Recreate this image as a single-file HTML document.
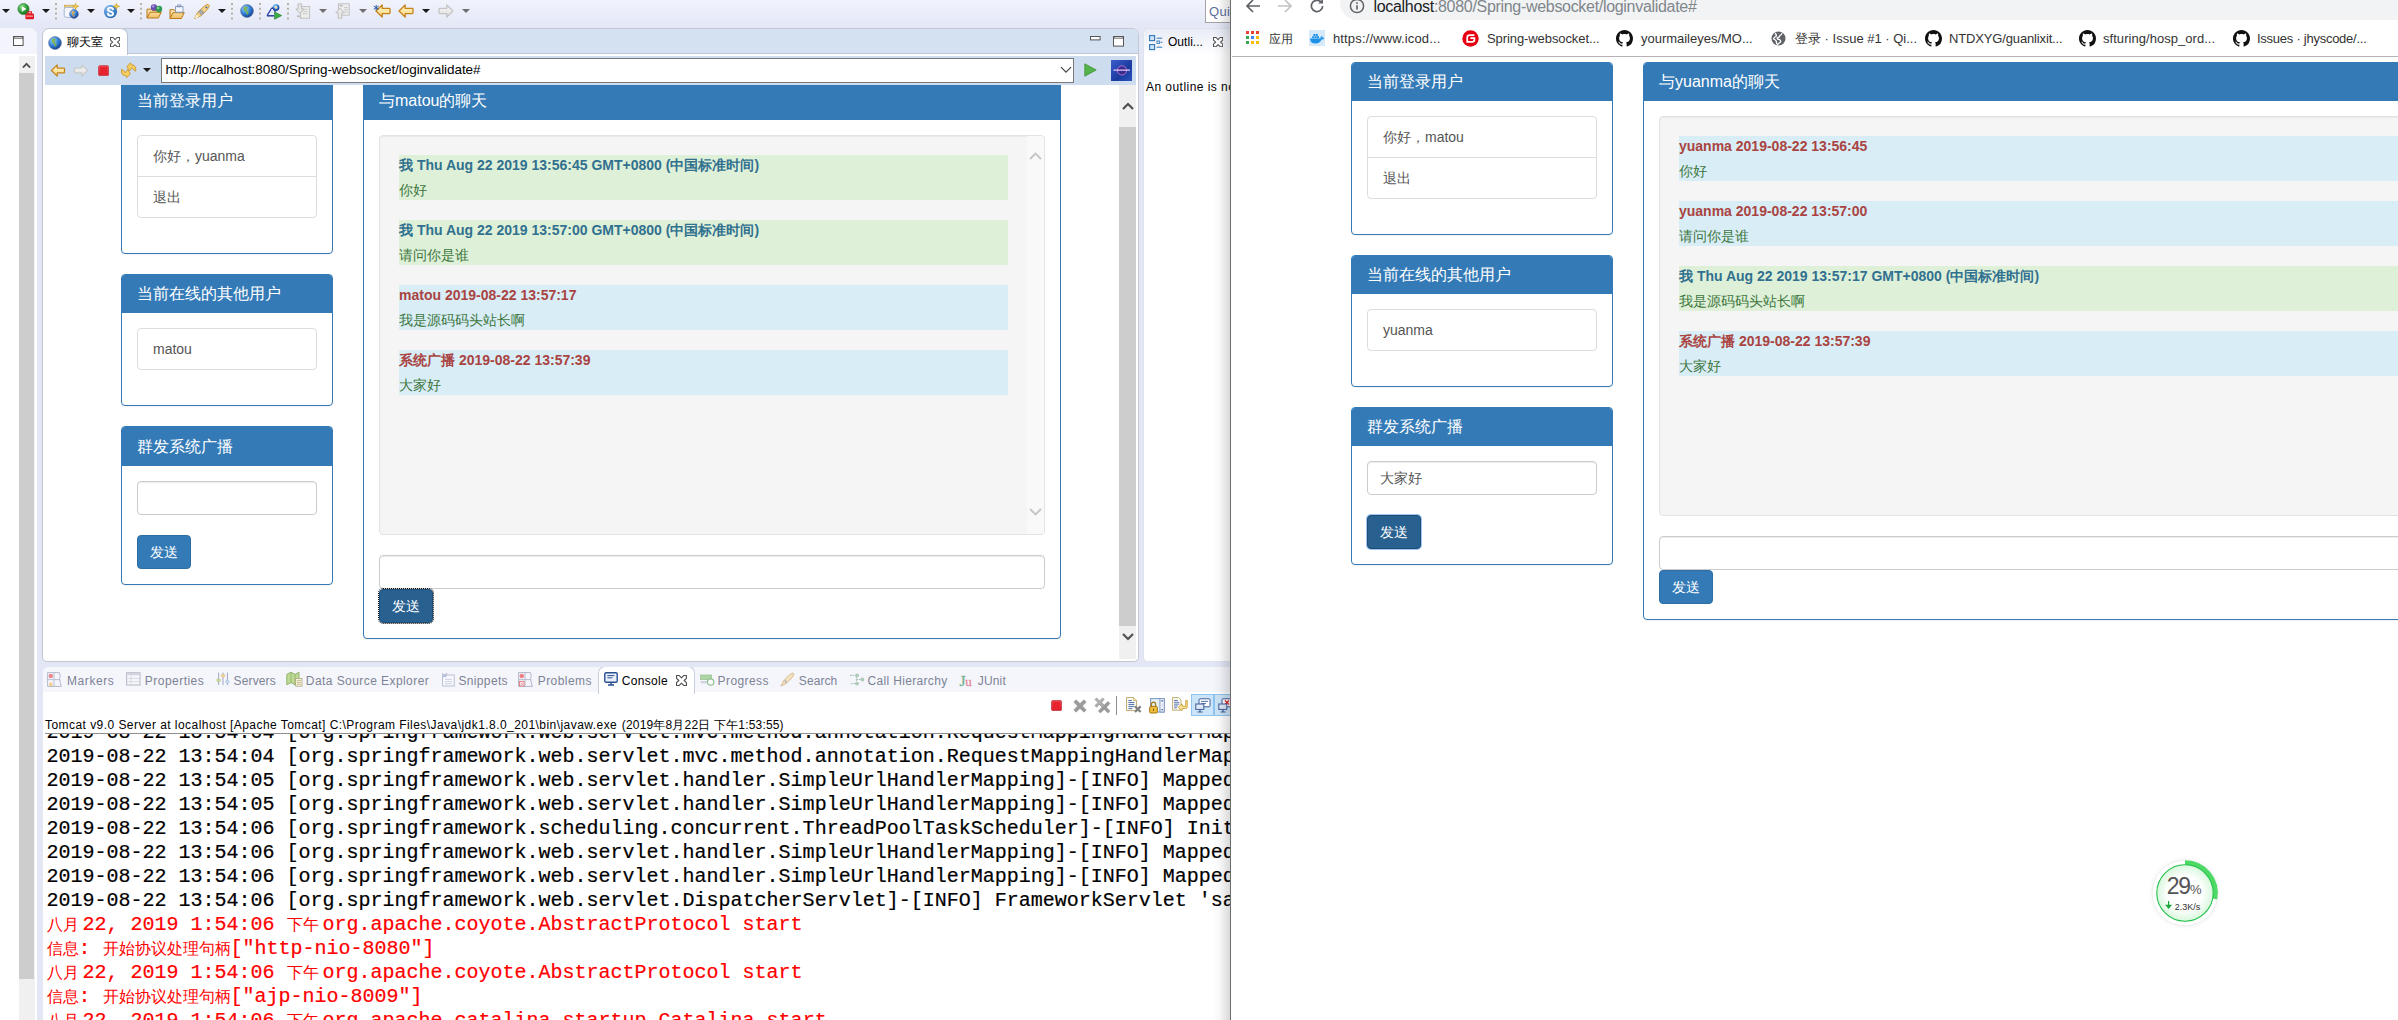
<!DOCTYPE html>
<html lang="zh">
<head>
<meta charset="utf-8">
<title>聊天室</title>
<style>
*{box-sizing:border-box;margin:0;padding:0}
html,body{width:2398px;height:1020px;overflow:hidden;background:#fff}
body{font-family:"Liberation Sans",sans-serif;font-size:12px;color:#000;position:relative}
.abs{position:absolute}
.nw{white-space:nowrap}
/* ---------- Eclipse shell ---------- */
#ecl{position:absolute;left:0;top:0;width:1231px;height:1020px;overflow:hidden;background:#e2e6f5}
#ecl-top{position:absolute;left:0;top:0;width:1231px;height:28px;background:linear-gradient(#f1f3fc,#e3e7f6)}
#leftstub{position:absolute;left:0;top:28px;width:37px;height:992px;background:#fff;border-top-right-radius:8px;overflow:hidden}
#leftstub .hd{position:absolute;left:0;top:0;width:37px;height:26px;background:#f4f5fc}
#editor{position:absolute;left:42px;top:28px;width:1097px;height:634px;background:#fff;border:1px solid #c3c7d2;border-radius:7px 7px 5px 5px;overflow:hidden}
#edtabs{position:absolute;left:0;top:0;width:1095px;height:25px;background:#d3e1f1;border-bottom:1px solid #b9c6da}
#edtab{position:absolute;left:-1px;top:-1px;width:86px;height:27px;background:#fff;border:1px solid #b9c0d3;border-bottom:none;border-radius:7px 7px 0 0}
#brbar{position:absolute;left:2px;top:27px;width:1091px;height:29px;background:#cddcee}
#url{position:absolute;left:116px;top:2px;width:913px;height:25px;background:#fff;border:1px solid #7a7a7a;font-size:13.5px;line-height:22px;padding-left:3.5px;white-space:nowrap}
#iepage{position:absolute;left:2px;top:56px;width:1074px;height:574px;background:#fff;overflow:hidden}
#iescroll{position:absolute;left:1076px;top:56px;width:17px;height:574px;background:#f0f0f0}
#outline{position:absolute;left:1143px;top:28px;width:100px;height:634px;background:#fff;border:1px solid #dfe3ef;border-radius:7px 0 0 5px;overflow:hidden}
#console{position:absolute;left:42px;top:666px;width:1200px;height:360px;background:#fff;border:1px solid #e4e8f4;border-radius:7px 0 0 0;overflow:hidden}
#contabs{position:absolute;left:0;top:0;width:1200px;height:25px;background:#f5f6fc}
/* ---------- bootstrap-ish ---------- */
.bs{font-size:14px;line-height:20px;color:#333}
.panel{position:absolute;background:#fff;border:1px solid #337ab7;border-radius:4px;box-shadow:0 1px 1px rgba(0,0,0,.05)}
.ph{position:absolute;left:0;top:0;right:0;height:38px;background:#337ab7;color:#fff;font-size:16px;line-height:18px;padding:10px 15px;border-radius:3px 3px 0 0;white-space:nowrap}
.lg{position:absolute;border:1px solid #ddd;border-radius:4px;background:#fff}
.lgi{height:41px;padding:10px 15px;color:#555;border-bottom:1px solid #ddd;white-space:nowrap}
.lgi:last-child{border-bottom:none;height:40px}
.fc{position:absolute;height:34px;border:1px solid #ccc;border-radius:4px;background:#fff;box-shadow:inset 0 1px 1px rgba(0,0,0,.075);padding:6px 12px;color:#555;white-space:nowrap}
.btn{position:absolute;width:54px;height:34px;border:1px solid #2e6da4;border-radius:4px;background:#337ab7;color:#fff;padding:6px 12px;text-align:center;white-space:nowrap}
.btn.act{background:#286090;border-color:#204d74}
.well{position:absolute;background:#f5f5f5;border:1px solid #e3e3e3;border-radius:4px;box-shadow:inset 0 1px 1px rgba(0,0,0,.05);overflow:hidden}
.msg{position:absolute;height:45px;white-space:nowrap}
.msg b{position:absolute;left:0;top:0;font-weight:bold}
.msg i{position:absolute;left:0;top:25px;font-style:normal;color:#3c763d}
.info{background:#d9edf7}.info b{color:#a94442}
.succ{background:#dff0d8}.succ b{color:#31708f}
/* ---------- chrome ---------- */
#chr{position:absolute;left:1231px;top:0;width:1167px;height:1020px;background:#fff;overflow:hidden;border-left:1px solid #fff}
#omni{position:absolute;left:108px;top:-14px;width:1200px;height:34px;border-radius:17px;background:#f1f3f4}
#bm{position:absolute;left:0;top:20px;width:1167px;height:37px;border-bottom:1px solid #b4b2b4;font-size:13px;color:#333}
#bm span{position:absolute;top:12px;line-height:14px;white-space:nowrap}
/* ---------- console ---------- */
.ct{font-size:12px;line-height:15px;margin-top:1px}
#context{position:absolute;left:2px;top:66px;width:1195px;height:300px;overflow:hidden;background:#fff;border-top:1px solid #8f8f8f}
#conlabel{position:absolute;left:2px;top:51px;font-size:12px;line-height:15px;color:#000}
.cl u{display:inline-block;text-decoration:none;font-family:"Liberation Serif",serif;font-size:16px;letter-spacing:0;vertical-align:baseline;white-space:pre;overflow:visible;-webkit-text-stroke:0}
.cl{position:absolute;left:1.5px;height:24px;line-height:24px;font-family:"Liberation Mono",monospace;font-size:20px;white-space:pre;color:#000;-webkit-text-stroke:.2px currentColor}
.cl.r{color:#ff0000}
/*FIT*/
#url-t{letter-spacing:-0.060px}
#ct-mark{letter-spacing:0.608px}
#ct-prop{letter-spacing:0.470px}
#ct-serv{letter-spacing:0.151px}
#ct-dse{letter-spacing:0.433px}
#ct-snip{letter-spacing:0.362px}
#ct-prob{letter-spacing:0.452px}
#ct-cons{letter-spacing:0.310px}
#ct-prog{letter-spacing:0.396px}
#ct-sear{letter-spacing:0.095px}
#ct-call{letter-spacing:0.324px}
#ct-juni{letter-spacing:0.191px}
#conlabel-a{letter-spacing:0.446px}
#conlabel-b{letter-spacing:0.178px}
#bm-1{letter-spacing:0.139px}
#bm-2{letter-spacing:-0.088px}
#bm-3{letter-spacing:-0.016px}
#bm-5{letter-spacing:-0.149px}
#bm-6{letter-spacing:0.045px}
#bm-7{letter-spacing:-0.257px}
#t-omni{letter-spacing:-0.307px}
#t-outl{letter-spacing:0.039px}
/*ENDFIT*/
</style>
</head>
<body>
<svg width="0" height="0" style="position:absolute">
<defs>
<radialGradient id="gGlobe" cx="35%" cy="30%" r="75%"><stop offset="0" stop-color="#9fd4ff"/><stop offset=".55" stop-color="#2f7fd6"/><stop offset="1" stop-color="#143c8c"/></radialGradient>
<radialGradient id="gGreen" cx="35%" cy="30%" r="75%"><stop offset="0" stop-color="#8fe08a"/><stop offset=".6" stop-color="#2f9e3a"/><stop offset="1" stop-color="#17681f"/></radialGradient>
<radialGradient id="gBlueS" cx="35%" cy="30%" r="80%"><stop offset="0" stop-color="#8fc0ee"/><stop offset=".6" stop-color="#3f86cf"/><stop offset="1" stop-color="#2b64a8"/></radialGradient>
<linearGradient id="gYel" x1="0" y1="0" x2="0" y2="1"><stop offset="0" stop-color="#fff6cf"/><stop offset="1" stop-color="#f9d67a"/></linearGradient>
<linearGradient id="gGry" x1="0" y1="0" x2="0" y2="1"><stop offset="0" stop-color="#fbfbfb"/><stop offset="1" stop-color="#dcdcdc"/></linearGradient>
<linearGradient id="gRed" x1="0" y1="0" x2="0" y2="1"><stop offset="0" stop-color="#f0505a"/><stop offset="1" stop-color="#d81e28"/></linearGradient>
<linearGradient id="gFold" x1="0" y1="0" x2="0" y2="1"><stop offset="0" stop-color="#fde9b8"/><stop offset="1" stop-color="#f0bf62"/></linearGradient>
</defs>
<symbol id="dd" viewBox="0 0 8 4"><path d="M0 0H8L4 4Z"/></symbol>
<symbol id="sepv" viewBox="0 0 2 17"><path d="M0 0h2v2H0zM0 4.8h2v2H0zM0 9.6h2v2H0zM0 14.4h2v2H0z" fill="#b9b3a3"/></symbol>
<symbol id="arrL" viewBox="0 0 16 14"><path d="M7.2 1 L1 7 L7.2 13 V9.6 H14.2 Q15 9.6 15 8.8 V5.2 Q15 4.4 14.2 4.4 H7.2 Z" stroke-width="1.3" stroke-linejoin="round"/></symbol>
<symbol id="arrR" viewBox="0 0 16 14"><path d="M8.8 1 L15 7 L8.8 13 V9.6 H1.8 Q1 9.6 1 8.8 V5.2 Q1 4.4 1.8 4.4 H8.8 Z" stroke-width="1.3" stroke-linejoin="round"/></symbol>
<symbol id="globe" viewBox="0 0 14 14"><circle cx="7" cy="7" r="6.4" fill="url(#gGlobe)" stroke="#5a6e9a" stroke-width=".6"/><path d="M4.2 2.6 Q6.5 2 8 3.4 Q7.6 5.2 6 5.6 Q6.8 7.2 8.6 7.6 Q9 9.6 7.4 11 Q6.2 9.6 6.2 8.2 Q4.4 7.4 3.6 5.6 Z" fill="#7cb24a" opacity=".9"/></symbol>
<symbol id="xclose" viewBox="0 0 10 10"><path d="M.5 .5H3L5 2.6L7 .5H9.5V3L7.4 5L9.5 7V9.5H7L5 7.4L3 9.5H.5V7L2.6 5L.5 3Z" fill="#fff" stroke="#505050" stroke-width="1" stroke-linejoin="round"/></symbol>
<symbol id="folder" viewBox="0 0 16 14"><path d="M1 13 V4.2 H5.2 L6.4 5.6 H12.2 V7.2 H15.2 L12.4 13 Z" fill="url(#gFold)" stroke="#b9781c" stroke-width="1" stroke-linejoin="round"/><path d="M1 13 L4 7.2 H15.2" fill="none" stroke="#b9781c" stroke-width="1"/></symbol>
<symbol id="gh" viewBox="0 0 16 16"><path fill="#111" d="M8 0C3.58 0 0 3.58 0 8c0 3.54 2.29 6.53 5.47 7.59.4.07.55-.17.55-.38 0-.19-.01-.82-.01-1.49-2.01.37-2.53-.49-2.69-.94-.09-.23-.48-.94-.82-1.13-.28-.15-.68-.52-.01-.53.63-.01 1.08.58 1.23.82.72 1.21 1.87.87 2.33.66.07-.52.28-.87.51-1.07-1.78-.2-3.64-.89-3.64-3.95 0-.87.31-1.59.82-2.15-.08-.2-.36-1.02.08-2.12 0 0 .67-.21 2.2.82.64-.18 1.32-.27 2-.27s1.36.09 2 .27c1.53-1.04 2.2-.82 2.2-.82.44 1.1.16 1.92.08 2.12.51.56.82 1.27.82 2.15 0 3.07-1.87 3.75-3.65 3.95.29.25.54.73.54 1.48 0 1.07-.01 1.93-.01 2.2 0 .21.15.46.55.38A8.01 8.01 0 0016 8c0-4.42-3.58-8-8-8z"/></symbol>
</svg>

<!-- ======================= ECLIPSE ======================= -->
<div id="ecl">
  <div id="ecl-top">
    <svg class="abs" style="left:1.5px;top:9px" width="8" height="4" fill="#1a1a1a"><use href="#dd"/></svg>
    <svg class="abs" style="left:17px;top:2.7px" width="18" height="17" viewBox="0 0 18 17"><circle cx="6.5" cy="6" r="5.6" fill="url(#gGreen)" stroke="#2a7a2f" stroke-width=".6"/><path d="M4.8 3.2 L9.4 6 L4.8 8.8Z" fill="#fff"/><rect x="8.4" y="10.4" width="8.6" height="5.8" rx="1" fill="#e01b24"/><rect x="11" y="8.8" width="3.4" height="2.2" fill="none" stroke="#e01b24" stroke-width="1.1"/><rect x="9.4" y="12.6" width="6.6" height="1" fill="#ffc9c9"/></svg>
    <svg class="abs" style="left:41.5px;top:9px" width="8" height="4" fill="#1a1a1a"><use href="#dd"/></svg>
    <svg class="abs" style="left:55px;top:3px" width="2" height="17"><use href="#sepv"/></svg>
    <svg class="abs" style="left:63px;top:3px" width="17" height="16" viewBox="0 0 17 16"><rect x="1.5" y="2.2" width="9" height="2" fill="#f1d489" stroke="#c09a3a" stroke-width=".6"/><rect x="1.2" y="4.4" width="9.6" height="10" rx="2.2" fill="#f4f6fb" stroke="#9fb0cf" stroke-width=".9"/><circle cx="11" cy="11" r="4.4" fill="url(#gGlobe)" stroke="#4a5f92" stroke-width=".5"/><path d="M9.4 8.4 q1.8 -.4 2.6 .8 q-.6 1.6 -1.8 1.6 q.4 1.6 1.8 2 q-.6 1 -1.8 1.2 q-1 -1.6 -.8 -3 q-1.2 -.8 -1 -2z" fill="#f0a030" opacity=".85"/><path d="M12.6 0.4 L13.5 2.5 L15.8 3.3 L13.5 4.2 L12.6 6.4 L11.7 4.2 L9.6 3.3 L11.7 2.5Z" fill="#f7d04a" stroke="#b8860b" stroke-width=".5"/></svg>
    <svg class="abs" style="left:86.5px;top:9px" width="8" height="4" fill="#1a1a1a"><use href="#dd"/></svg>
    <svg class="abs" style="left:103px;top:3px" width="18" height="16" viewBox="0 0 18 16"><circle cx="7.5" cy="8.6" r="6.6" fill="url(#gBlueS)"/><path d="M10 6.2 Q9.4 4.6 7.4 4.6 Q5 4.6 5 6.6 Q5 8 7.4 8.6 Q10 9.2 10 10.8 Q10 12.6 7.6 12.6 Q5.2 12.6 4.8 10.8" fill="none" stroke="#fff" stroke-width="1.9" stroke-linecap="round"/><path d="M13.4 0.4 L14.3 2.5 L16.6 3.3 L14.3 4.2 L13.4 6.4 L12.5 4.2 L10.4 3.3 L12.5 2.5Z" fill="#f7d04a" stroke="#b8860b" stroke-width=".5"/></svg>
    <svg class="abs" style="left:126.5px;top:9px" width="8" height="4" fill="#1a1a1a"><use href="#dd"/></svg>
    <svg class="abs" style="left:140px;top:3px" width="2" height="17"><use href="#sepv"/></svg>
    <svg class="abs" style="left:146px;top:3px" width="18" height="16" viewBox="0 0 18 16"><g transform="translate(0,2)"><use href="#folder" width="16" height="14"/></g><circle cx="8" cy="4.4" r="3.2" fill="#6b4fb0"/><circle cx="7.2" cy="3.4" r="1.1" fill="#b8a6e6"/><circle cx="13" cy="6" r="3.2" fill="#2e9a52"/><circle cx="12.2" cy="5" r="1.1" fill="#a4e2b6"/></svg>
    <svg class="abs" style="left:169px;top:4px" width="18" height="16" viewBox="0 0 18 16"><g transform="translate(0,1.5)"><use href="#folder" width="16" height="14"/></g><rect x="6.6" y="2.6" width="7.4" height="5.6" fill="#f4f7ff" stroke="#7f93b8" stroke-width=".9"/><rect x="8.8" y="1" width="3" height="1.8" fill="none" stroke="#7f93b8" stroke-width=".9"/></svg>
    <svg class="abs" style="left:193px;top:3px" width="18" height="17" viewBox="0 0 18 17"><path d="M1.5 15.5 L4.6 9.4 L11.4 3 L15 1.2 L16.4 2.6 L14.6 6.2 L8 12.8 Z" fill="#f6d38a" stroke="#c68e2a" stroke-width=".9" stroke-linejoin="round"/><path d="M5.4 9 L8.6 12.2 L11.2 9.6 L8 6.4Z" fill="#a8a8a8" stroke="#8a8a8a" stroke-width=".5"/><path d="M1.5 15.5 L3.6 11.6 L5.8 13.8Z" fill="#fffbe8"/><circle cx="13.4" cy="4.4" r=".9" fill="#2c5fa8"/></svg>
    <svg class="abs" style="left:217.5px;top:9px" width="8" height="4" fill="#1a1a1a"><use href="#dd"/></svg>
    <svg class="abs" style="left:231px;top:3px" width="2" height="17"><use href="#sepv"/></svg>
    <svg class="abs" style="left:239.5px;top:3.5px" width="14" height="14"><use href="#globe"/></svg>
    <svg class="abs" style="left:259px;top:3px" width="2" height="17"><use href="#sepv"/></svg>
    <svg class="abs" style="left:266px;top:3px" width="17" height="17" viewBox="0 0 17 17"><circle cx="10" cy="4.6" r="3.4" fill="url(#gGlobe)"/><circle cx="10" cy="4.4" r="1.4" fill="#f2d9a0"/><path d="M1 12.6 L5.4 5.6 Q6.4 4.4 7.4 5.6 L9.4 9" fill="none" stroke="#2a3fa0" stroke-width="1.3"/><path d="M1 12.8 H8" stroke="#2a3fa0" stroke-width="1.5"/><path d="M5.6 6 L7.8 9.6 L4 11.6Z" fill="#dfe8f8"/><path d="M8.6 9 L15.6 12.6 L8.6 16.2Z" fill="#3fae49" stroke="#1f7d2b" stroke-width=".7"/></svg>
    <svg class="abs" style="left:287px;top:3px" width="2" height="17"><use href="#sepv"/></svg>
    <svg class="abs" style="left:295px;top:3px" width="16" height="16" viewBox="0 0 16 16"><rect x="5.4" y="3.6" width="9.2" height="11.6" fill="#ececec" stroke="#bdbdbd" stroke-width=".9"/><path d="M7.4 6.4h5M7.4 8.6h5M7.4 10.8h5" stroke="#c8c8c8" stroke-width=".9"/><path d="M3 .8 H6.6 V6 H8.8 L4.8 10.4 L.8 6 H3Z" fill="#e6e6e6" stroke="#b5b5b5" stroke-width=".8"/><rect x="2" y="12.4" width="3.2" height="1.8" fill="#bdbdbd"/></svg>
    <svg class="abs" style="left:318.5px;top:9px" width="8" height="4" fill="#6f6f6f"><use href="#dd"/></svg>
    <svg class="abs" style="left:335px;top:3px" width="16" height="16" viewBox="0 0 16 16"><rect x="3.4" y=".8" width="10.8" height="11.4" fill="#ececec" stroke="#bdbdbd" stroke-width=".9"/><rect x="4.6" y="1.8" width="3" height="1.6" fill="#bdbdbd"/><path d="M9 4.6h4M9 6.8h4M9 9h4" stroke="#c8c8c8" stroke-width=".9"/><path d="M3.2 15.2 V9.8 H.8 L5 5.2 L9.2 9.8 H6.8 V15.2Z" fill="#e9e9e9" stroke="#b5b5b5" stroke-width=".8"/></svg>
    <svg class="abs" style="left:358.5px;top:9px" width="8" height="4" fill="#6f6f6f"><use href="#dd"/></svg>
    <svg class="abs" style="left:373px;top:4px" width="18" height="14" viewBox="0 0 18 14"><g transform="translate(2,0)"><use href="#arrL" width="16" height="14" fill="url(#gYel)" stroke="#c5831a"/></g><path d="M3.2 1v5.4M.8 2.2l4.8 3M5.6 2.2l-4.8 3" stroke="#2c5aa0" stroke-width="1"/></svg>
    <svg class="abs" style="left:398px;top:4px" width="16" height="14" fill="url(#gYel)" stroke="#c5831a"><use href="#arrL"/></svg>
    <svg class="abs" style="left:421.5px;top:9px" width="8" height="4" fill="#1a1a1a"><use href="#dd"/></svg>
    <svg class="abs" style="left:438px;top:4px" width="16" height="14" fill="url(#gGry)" stroke="#c4c4c4"><use href="#arrR"/></svg>
    <svg class="abs" style="left:461.5px;top:9px" width="8" height="4" fill="#6f6f6f"><use href="#dd"/></svg>
    <div class="abs nw" style="left:1205px;top:-1px;width:40px;height:24px;background:#fff;border:1px solid #a3a3a3;color:#5a6c9c;font-size:13px;line-height:24px;padding-left:3px;letter-spacing:.3px">Quick Access</div>
  </div>
  <div id="leftstub"><div class="hd"></div>
    <svg class="abs" style="left:12.6px;top:8px" width="11" height="10.4" viewBox="0 0 11 10.4"><rect x=".5" y=".5" width="9.6" height="9" fill="#fff" stroke="#555" stroke-width="1"/><rect x=".5" y=".5" width="9.6" height="2.2" fill="#555"/><rect x="1.4" y="1.3" width="7.8" height=".8" fill="#fff"/></svg>
    <div class="abs" style="left:19px;top:28px;width:16px;height:964px;background:#f0f0f0"></div>
    <div class="abs" style="left:19px;top:45px;width:15px;height:906px;background:#cdcdcd"></div>
    <svg class="abs" style="left:22px;top:33.5px" width="9" height="6.4" viewBox="0 0 9 6.4"><path d="M.9 5.6 L4.5 1.8 L8.1 5.6" fill="none" stroke="#505050" stroke-width="1.8"/></svg>
  </div>

  <div id="editor">
    <div id="edtabs"></div>
    <div id="edtab">
      <svg class="abs" style="left:5.2px;top:6.8px" width="14" height="14"><use href="#globe"/></svg>
      <span class="abs nw" style="left:24px;top:6px;font-size:12px;line-height:15px">聊天室</span>
      <svg class="abs" style="left:66.8px;top:8px" width="10.2" height="10.2"><use href="#xclose"/></svg>
    </div>
    <svg class="abs" style="left:1047px;top:7px" width="11" height="5" viewBox="0 0 11 5"><rect x=".5" y=".5" width="9.6" height="3.4" fill="#fff" stroke="#555" stroke-width="1"/></svg>
    <svg class="abs" style="left:1070px;top:7px" width="12" height="11" viewBox="0 0 12 11"><rect x=".5" y=".5" width="10" height="9.6" fill="#fff" stroke="#555" stroke-width="1"/><rect x=".5" y=".5" width="10" height="2.2" fill="#555"/><rect x="1.4" y="1.3" width="8.2" height=".9" fill="#fff"/></svg>
    <div id="brbar">
      <svg class="abs" style="left:5px;top:8px" width="16" height="13" fill="url(#gYel)" stroke="#c5831a"><use href="#arrL"/></svg>
      <svg class="abs" style="left:28px;top:8px" width="16" height="13" fill="url(#gGry)" stroke="#c9c9c9"><use href="#arrR"/></svg>
      <svg class="abs" style="left:53px;top:8.7px" width="11.2" height="11.4" viewBox="0 0 12 12"><rect x=".6" y=".6" width="10.8" height="10.8" rx="1.6" fill="url(#gRed)" stroke="#c9434b" stroke-width="1"/><rect x="2" y="2" width="8" height="8" fill="#e8222e"/></svg>
      <svg class="abs" style="left:75.5px;top:6px" width="16" height="17" viewBox="0 0 16 17"><path d="M5.8 4.8 L9.4 .8 L10.4 2.8 Q13.6 2.6 14.6 5.4 L14.8 9.2 L12.6 7.8 Q11.8 5.8 10.8 5.8 L8.6 8.8 Z" fill="#f7cf5e" stroke="#c98d1e" stroke-width=".8" stroke-linejoin="round"/><path d="M5.8 4.8 L9.4 .8 L10.4 2.8 Q13.6 2.6 14.6 5.4 L14.8 9.2 L12.6 7.8 Q11.8 5.8 10.8 5.8 L8.6 8.8 Z" fill="#f7cf5e" stroke="#c98d1e" stroke-width=".8" stroke-linejoin="round" transform="rotate(180 7.6 8.2)"/></svg>
      <svg class="abs" style="left:98px;top:12px" width="8" height="4" fill="#1a1a1a"><use href="#dd"/></svg>
      <div id="url"><span id="url-t">http://localhost:8080/Spring-websocket/loginvalidate#</span></div>
      <svg class="abs" style="left:1015px;top:10px" width="12" height="8" viewBox="0 0 12 8"><path d="M1 1.2 L6 6.2 L11 1.2" fill="none" stroke="#444" stroke-width="1.2"/></svg>
      <svg class="abs" style="left:1039px;top:7px" width="13" height="14" viewBox="0 0 13 14"><path d="M.8 .8 L12.2 7 L.8 13.2Z" fill="#56b24a" stroke="#3c9435" stroke-width=".8" stroke-linejoin="round"/></svg>
      <div class="abs" style="left:1066px;top:4px;width:21px;height:21px;background:linear-gradient(135deg,#3d5fd0,#1a3a9c 60%,#2a55c0)">
        <svg class="abs" style="left:1px;top:3px" width="19" height="15" viewBox="0 0 19 15"><circle cx="10" cy="7.4" r="4.6" fill="#3a2a8c"/><circle cx="10" cy="7.4" r="4.6" fill="none" stroke="#c77fe0" stroke-width="1" opacity=".8"/><path d="M1.5 7.2 H18" stroke="#e9c8ff" stroke-width="1.2"/></svg>
      </div>
    </div>
    <div id="iepage" class="bs">
      <!-- origin = abs (45,85) -->
      <div class="panel" style="left:76px;top:-4px;width:212px;height:173px">
        <div class="ph">当前登录用户</div>
        <div class="lg" style="left:15px;top:53px;width:180px;height:83px">
          <div class="lgi">你好，yuanma</div>
          <div class="lgi">退出</div>
        </div>
      </div>
      <div class="panel" style="left:76px;top:189px;width:212px;height:132px">
        <div class="ph">当前在线的其他用户</div>
        <div class="lg" style="left:15px;top:53px;width:180px;height:42px">
          <div class="lgi">matou</div>
        </div>
      </div>
      <div class="panel" style="left:76px;top:341px;width:212px;height:159px">
        <div class="ph" style="height:39px;padding-top:11px">群发系统广播</div>
        <div class="fc" style="left:15px;top:54px;width:180px"></div>
        <div class="btn" style="left:15px;top:108px">发送</div>
      </div>
      <div class="panel" style="left:318px;top:-4px;width:698px;height:558px">
        <div class="ph">与matou的聊天</div>
        <div class="well" style="left:15px;top:53px;width:666px;height:400px">
          <div class="msg succ" style="left:19px;top:19px;width:609px"><b>我 Thu Aug 22 2019 13:56:45 GMT+0800 (中国标准时间)</b><i>你好</i></div>
          <div class="msg succ" style="left:19px;top:84px;width:609px"><b>我 Thu Aug 22 2019 13:57:00 GMT+0800 (中国标准时间)</b><i>请问你是谁</i></div>
          <div class="msg info" style="left:19px;top:149px;width:609px"><b>matou 2019-08-22 13:57:17</b><i>我是源码码头站长啊</i></div>
          <div class="msg info" style="left:19px;top:214px;width:609px"><b>系统广播 2019-08-22 13:57:39</b><i>大家好</i></div>
          <div class="abs" style="left:647px;top:0;width:17px;height:398px;background:#f9f9f9">
            <svg class="abs" style="left:2px;top:16px" width="13" height="8" viewBox="0 0 13 8"><path d="M1 7 L6.5 1.6 L12 7" fill="none" stroke="#c6c6c6" stroke-width="2"/></svg>
            <svg class="abs" style="left:2px;top:372px" width="13" height="8" viewBox="0 0 13 8"><path d="M1 1 L6.5 6.4 L12 1" fill="none" stroke="#c6c6c6" stroke-width="2"/></svg>
          </div>
        </div>
        <div class="fc" style="left:15px;top:473px;width:666px"></div>
        <div class="btn act" style="left:15px;top:507px;outline:1px dotted #111;outline-offset:0">发送</div>
      </div>
    </div>
    <div id="iescroll">
      <svg class="abs" style="left:2.5px;top:17px" width="12" height="8" viewBox="0 0 12 8"><path d="M1 7 L6 2 L11 7" fill="none" stroke="#505050" stroke-width="2.2"/></svg>
      <div class="abs" style="left:0;top:42px;width:17px;height:499px;background:#cdcdcd"></div>
      <svg class="abs" style="left:2.5px;top:548px" width="12" height="8" viewBox="0 0 12 8"><path d="M1 1 L6 6 L11 1" fill="none" stroke="#505050" stroke-width="2.2"/></svg>
    </div>
  </div>

  <div id="outline">
    <div class="abs" style="left:0;top:0;width:100px;height:26px;background:linear-gradient(#e9ecf7,#fff)"></div>
    <svg class="abs" style="left:5px;top:6px" width="14" height="16" viewBox="0 0 14 16"><rect x=".6" y=".6" width="5" height="5" fill="#cfe3f7" stroke="#2f76b8" stroke-width="1.1"/><rect x=".6" y="9.6" width="5" height="5" fill="#cfe3f7" stroke="#2f76b8" stroke-width="1.1"/><rect x="8" y="6" width="2.4" height="2.4" fill="#fff" stroke="#2f76b8" stroke-width=".9"/><path d="M7.6 3.2h5.6M11.4 7.2h2M7.6 12.2h5.6" stroke="#2f76b8" stroke-width="1"/></svg>
    <span class="abs nw" id="t-outl" style="left:24px;top:6px;font-size:12px;line-height:15px">Outli...</span>
    <svg class="abs" style="left:69px;top:8px" width="10.2" height="10.2"><use href="#xclose"/></svg>
    <span class="abs nw" id="t-anout" style="left:2px;top:51px;font-size:12px;line-height:15px;letter-spacing:.45px">An outline is not available.</span>
  </div>

  <div id="console">
    <div id="contabs">
      <div class="abs" style="left:555px;top:-1px;width:97px;height:28px;background:#fff;border:1px solid #c9cfdf;border-bottom:none;border-radius:7px 7px 0 0"></div>
      <svg class="abs" style="left:3.5px;top:5px" width="15" height="15" viewBox="0 0 15 15"><g opacity=".6"><path d="M.6 .6H12.4Q14 3 12.6 6.5Q13 11 14.4 14.4H.6Z" fill="#f4f6fb" stroke="#8a94ad" stroke-width="1"/><path d="M.6 7.6H13M7 .6V14.4" stroke="#8a94ad" stroke-width=".9"/><circle cx="3.8" cy="4" r="2.3" fill="#e8404a"/><path d="M2 14V11.6L3.8 10L5.6 11.6V14Z" fill="#f2b84a"/></g></svg><span class="abs nw ct" id="ct-mark" style="left:23.9px;top:6px;color:#7d8394">Markers</span>
      <svg class="abs" style="left:83px;top:5px" width="15" height="14" viewBox="0 0 15 14"><g opacity=".6"><rect x=".6" y=".6" width="13.4" height="12.4" fill="#f7f8fc" stroke="#8a8fa0" stroke-width="1"/><rect x=".6" y=".6" width="13.4" height="2.6" fill="#b9bccb"/><path d="M5 3.2V13M.6 6.4H14M.6 9.6H14" stroke="#b5b9c8" stroke-width=".8"/></g></svg><span class="abs nw ct" id="ct-prop" style="left:101.8px;top:6px;color:#7d8394">Properties</span>
      <svg class="abs" style="left:173px;top:5px" width="14" height="14" viewBox="0 0 14 14"><g opacity=".7"><path d="M2.6 .6V13M7 .6V13M11.4 .6V13" stroke="#7c86b0" stroke-width="1"/><rect x=".8" y="7" width="3.6" height="2.6" rx="1" fill="#bfd46a" stroke="#8da23a" stroke-width=".5"/><rect x="5.2" y="2.4" width="3.6" height="2.6" rx="1" fill="#f1cf72" stroke="#c39a2d" stroke-width=".5"/><rect x="9.6" y="8.6" width="3.6" height="2.6" rx="1" fill="#b9d6ee" stroke="#7da5c8" stroke-width=".5"/></g></svg><span class="abs nw ct" id="ct-serv" style="left:190.5px;top:6px;color:#7d8394">Servers</span>
      <svg class="abs" style="left:242.5px;top:4px" width="17" height="16" viewBox="0 0 17 16"><g opacity=".7"><path d="M.8 3.4L5 1.2L9 3.4L13 1.2V11.6L9 13.8L5 11.6L.8 13.8Z" fill="#a8cf6a" stroke="#5f8f2f" stroke-width=".9"/><path d="M5 1.2V11.6M9 3.4V13.8" stroke="#5f8f2f" stroke-width=".8"/><rect x="9.6" y="7.4" width="6.4" height="7.8" fill="#fbf3c8" stroke="#8a8454" stroke-width=".8"/><path d="M10.8 9.6h4M10.8 11.4h4M10.8 13.2h4" stroke="#8a8454" stroke-width=".7"/></g></svg><span class="abs nw ct" id="ct-dse" style="left:262.8px;top:6px;color:#7d8394">Data Source Explorer</span>
      <svg class="abs" style="left:398px;top:5px" width="14" height="15" viewBox="0 0 14 15"><g opacity=".6"><rect x="1.6" y="3" width="11.6" height="11" fill="#fbfcff" stroke="#8a94ad" stroke-width=".9"/><path d="M1 1.2l4 3.2M5.4 1l-.6 3.6l-3.4-.4" stroke="#6a7fb5" stroke-width=".9" fill="none"/><path d="M4 7.4h7M4 9.6h7M4 11.8h7" stroke="#aab2c8" stroke-width=".9"/></g></svg><span class="abs nw ct" id="ct-snip" style="left:415.4px;top:6px;color:#7d8394">Snippets</span>
      <svg class="abs" style="left:474.5px;top:5px" width="15" height="15" viewBox="0 0 15 15"><g opacity=".65"><path d="M.6 .6H12.4Q14 3 12.6 6.5Q13 11 14.4 14.4H.6Z" fill="#f4f6fb" stroke="#8a94ad" stroke-width="1"/><path d="M.6 7.6H13M7 .6V14.4" stroke="#8a94ad" stroke-width=".9"/><circle cx="3.8" cy="4" r="2.3" fill="#e8404a"/><rect x="1.4" y="9.4" width="4.6" height="4.6" fill="#fff" stroke="#d8353f" stroke-width=".9"/><path d="M2.6 10.6l2.2 2.2M4.8 10.6l-2.2 2.2" stroke="#d8353f" stroke-width=".8"/></g></svg><span class="abs nw ct" id="ct-prob" style="left:494.7px;top:6px;color:#7d8394">Problems</span>
      <svg class="abs" style="left:561px;top:5px" width="14" height="14" viewBox="0 0 14 14"><rect x=".8" y=".8" width="12.4" height="9.4" rx="1.2" fill="#e8f0fb" stroke="#2a4f8f" stroke-width="1.4"/><path d="M3.4 3.6h7M3.4 5.8h5" stroke="#2a4f8f" stroke-width="1"/><path d="M4 13h6M7 10.4V13" stroke="#2a4f8f" stroke-width="1.4"/></svg><span class="abs nw ct" id="ct-cons" style="left:578.8px;top:6px;color:#000">Console</span>
      <svg class="abs" style="left:632.5px;top:8px" width="11" height="11"><use href="#xclose"/></svg>
      <svg class="abs" style="left:656.5px;top:7px" width="15" height="12" viewBox="0 0 15 12"><g opacity=".6"><rect x=".6" y="1" width="11" height="4.6" fill="#7fc06a" stroke="#5a9a48" stroke-width=".7"/><rect x=".6" y="7" width="6" height="2.4" fill="#b8bdd0"/><circle cx="10.6" cy="8" r="3.2" fill="#fff" stroke="#4a9a48" stroke-width="1.2"/></g></svg><span class="abs nw ct" id="ct-prog" style="left:674.6px;top:6px;color:#7d8394">Progress</span>
      <svg class="abs" style="left:736.5px;top:5px" width="15" height="15" viewBox="0 0 15 15"><g opacity=".6"><path d="M1 14L3.6 8.8L10 2.4L12.8 1L14 2.2L12.6 5L6.2 11.4Z" fill="#f2d89a" stroke="#b88a3a" stroke-width=".9" stroke-linejoin="round"/><path d="M4.6 8.4L6.8 10.6" stroke="#8f8f8f" stroke-width="1.6"/></g></svg><span class="abs nw ct" id="ct-sear" style="left:755.8px;top:6px;color:#7d8394">Search</span>
      <svg class="abs" style="left:805.5px;top:5px" width="16" height="15" viewBox="0 0 16 15"><g opacity=".6"><path d="M1 3.4H7.4V11.6H1M7.4 7.5H15" fill="none" stroke="#6b8f7a" stroke-width="1" stroke-dasharray="1.6 1"/><circle cx="8" cy="3.4" r="1.9" fill="#7fb08f"/><circle cx="8" cy="11.6" r="1.9" fill="#7fb08f"/><circle cx="13.4" cy="7.5" r="1.9" fill="#7fb08f"/></g></svg><span class="abs nw ct" id="ct-call" style="left:824.6px;top:6px;color:#7d8394">Call Hierarchy</span>
      <span class="abs nw" style="left:916.5px;top:5.5px;font-family:'Liberation Serif',serif;font-size:15.5px;line-height:16px;color:#76b08c;letter-spacing:-.3px;-webkit-text-stroke:.3px currentColor">J<span style="color:#e48a96;font-size:13px">u</span></span>
      <span class="abs nw ct" id="ct-juni" style="left:934.7px;top:6px;color:#7d8394">JUnit</span>
    </div>
    <svg class="abs" style="left:1007.8px;top:32.8px" width="11.2" height="11.2" viewBox="0 0 12 12"><rect x=".6" y=".6" width="10.8" height="10.8" rx="1.6" fill="url(#gRed)" stroke="#c9434b" stroke-width="1"/><rect x="2" y="2" width="8" height="8" fill="#e8222e"/></svg>
    <svg class="abs" style="left:1029.5px;top:31.5px" width="14" height="14" viewBox="0 0 14 14"><path d="M.8 3L3 .8L7 4.6L11 .8L13.2 3L9.4 7L13.2 11L11 13.2L7 9.4L3 13.2L.8 11L4.6 7Z" fill="#9a9a9a" stroke="#8c8c8c" stroke-width=".5"/></svg>
    <svg class="abs" style="left:1051px;top:30px" width="17" height="17" viewBox="0 0 17 17"><path d="M4.4 6.4L6.4 4.4L10.2 8L14 4.4L16 6.4L12.4 10.2L16 14L14 16L10.2 12.4L6.4 16L4.4 14L8 10.2Z" fill="#9a9a9a" stroke="#8c8c8c" stroke-width=".5"/><path d="M.8 2.6L2.6 .8L5.6 3.8L8.6 .8L10.4 2.6L7.4 5.6L10.4 8.6L8.6 10.4L5.6 7.4L2.6 10.4L.8 8.6L3.8 5.6Z" fill="#b0b0b0" stroke="#8f8f8f" stroke-width=".4"/></svg>
    <div class="abs" style="left:1073px;top:29px;width:1px;height:19px;background:#8f8f8f"></div>
    <svg class="abs" style="left:1082.5px;top:29.5px" width="16" height="16" viewBox="0 0 16 16"><path d="M.6 .6H7.6L10.6 3.6V13.6H.6Z" fill="#fffef4" stroke="#bba76c" stroke-width="1"/><path d="M7.6 .6V3.6H10.6" fill="#f3e3a8" stroke="#bba76c" stroke-width=".8"/><path d="M2.4 3.6h3.6M2.4 5.6h6M2.4 7.6h6M2.4 9.6h6M2.4 11.6h4" stroke="#4f6bb0" stroke-width="1"/><path d="M9 9.4l5.6 5.6M14.6 9.4l-5.6 5.6" stroke="#808080" stroke-width="2.2"/></svg>
    <svg class="abs" style="left:1105.5px;top:30.5px" width="16" height="16" viewBox="0 0 16 16"><rect x="1.6" y=".6" width="13.6" height="13.4" fill="#e4f1fb" stroke="#7a93bd" stroke-width="1"/><rect x="11" y=".6" width="4.2" height="13.4" fill="#fff" stroke="#7a93bd" stroke-width="1"/><rect x="12.4" y="2.2" width="1.5" height="1.5" fill="#3b5fa8"/><rect x="12.4" y="10.9" width="1.5" height="1.5" fill="#3b5fa8"/><rect x="11.6" y="5.2" width="3" height="4" fill="#dfe7f3"/><rect x=".6" y="8.4" width="7.8" height="6.6" rx="1.2" fill="#eebb3c" stroke="#a97b12" stroke-width="1"/><path d="M2.4 8.4V6.6Q2.4 4.2 4.5 4.2Q6.6 4.2 6.6 6.6V8.4" fill="none" stroke="#a97b12" stroke-width="1.3"/><rect x="4" y="10.8" width="1" height="2" fill="#7a5a0a"/></svg>
    <svg class="abs" style="left:1128.5px;top:29.5px" width="16" height="15" viewBox="0 0 17 16"><path d="M.6 .6H7L9.6 3.2V14H.6Z" fill="#fffef4" stroke="#bba76c" stroke-width="1"/><path d="M2.2 3.6h4M2.2 5.6h5.6M2.2 7.6h5.6M2.2 9.6h4M2.2 11.6h3" stroke="#4f6bb0" stroke-width="1"/><path d="M14.6 3.6V9.8H10.8V7.4L6.6 11L10.8 14.6V12.2H14.6Q16.2 12.2 16.2 10.6V3.6Z" fill="#fbe7a2" stroke="#c79a2b" stroke-width=".9" stroke-linejoin="round"/></svg>
    <div class="abs" style="left:1148px;top:27px;width:23px;height:22px;background:#cce4f7;border:1px solid #8fc4f0"></div>
    <div class="abs" style="left:1171px;top:27px;width:23px;height:22px;background:#cce4f7;border:1px solid #8fc4f0"></div>
    <svg class="abs" style="left:1152px;top:31px" width="16" height="15" viewBox="0 0 16 15"><rect x="4" y=".8" width="11" height="8" rx="1" fill="#fff" stroke="#3f5f9a" stroke-width="1"/><path d="M6 3.4h7M6 5.6h5" stroke="#3f5f9a" stroke-width=".9"/><rect x=".8" y="6" width="8" height="5.4" fill="#dfe9f8" stroke="#3f5f9a" stroke-width="1"/><path d="M2.6 14h5M5 11.4V14" stroke="#3f5f9a" stroke-width="1.2"/></svg>
    <svg class="abs" style="left:1175px;top:31px" width="16" height="15" viewBox="0 0 16 15"><rect x="4" y=".8" width="11" height="8" rx="1" fill="#fff" stroke="#3f5f9a" stroke-width="1"/><path d="M7 2.4l4 4M11 2.4l-4 4" stroke="#e02a34" stroke-width="1.4"/><rect x=".8" y="6" width="8" height="5.4" fill="#dfe9f8" stroke="#3f5f9a" stroke-width="1"/><path d="M2.6 14h5M5 11.4V14" stroke="#3f5f9a" stroke-width="1.2"/></svg>
    <div id="conlabel" class="nw"><span id="conlabel-a">Tomcat v9.0 Server at localhost [Apache Tomcat] C:\Program Files\Java\jdk1.8.0_201\bin\javaw.exe</span> <span id="conlabel-b" class="abs" style="left:576.8px;top:0">(2019年8月22日 下午1:53:55)</span></div>
    <div id="context">
      <div class="cl" style="top:-13px">2019-08-22 13:54:04 [org.springframework.web.servlet.mvc.method.annotation.RequestMappingHandlerMapping]-[INFO] Mapped</div>
      <div class="cl" style="top:11px">2019-08-22 13:54:04 [org.springframework.web.servlet.mvc.method.annotation.RequestMappingHandlerMapping]-[INFO] Mapped</div>
      <div class="cl" style="top:35px">2019-08-22 13:54:05 [org.springframework.web.servlet.handler.SimpleUrlHandlerMapping]-[INFO] Mapped URL path</div>
      <div class="cl" style="top:59px">2019-08-22 13:54:05 [org.springframework.web.servlet.handler.SimpleUrlHandlerMapping]-[INFO] Mapped URL path</div>
      <div class="cl" style="top:83px">2019-08-22 13:54:06 [org.springframework.scheduling.concurrent.ThreadPoolTaskScheduler]-[INFO] Initializing</div>
      <div class="cl" style="top:107px">2019-08-22 13:54:06 [org.springframework.web.servlet.handler.SimpleUrlHandlerMapping]-[INFO] Mapped URL path</div>
      <div class="cl" style="top:131px">2019-08-22 13:54:06 [org.springframework.web.servlet.handler.SimpleUrlHandlerMapping]-[INFO] Mapped URL path</div>
      <div class="cl" style="top:155px">2019-08-22 13:54:06 [org.springframework.web.servlet.DispatcherServlet]-[INFO] FrameworkServlet 'salesystem'</div>
      <div class="cl r" style="top:179px"><u style="width:36px">八月 </u>22, 2019 1:54:06 <u style="width:36px">下午 </u>org.apache.coyote.AbstractProtocol start</div>
      <div class="cl r" style="top:203px"><u style="width:32px">信息</u>: <u style="width:128px">开始协议处理句柄</u>["http-nio-8080"]</div>
      <div class="cl r" style="top:227px"><u style="width:36px">八月 </u>22, 2019 1:54:06 <u style="width:36px">下午 </u>org.apache.coyote.AbstractProtocol start</div>
      <div class="cl r" style="top:251px"><u style="width:32px">信息</u>: <u style="width:128px">开始协议处理句柄</u>["ajp-nio-8009"]</div>
      <div class="cl r" style="top:275px"><u style="width:36px">八月 </u>22, 2019 1:54:06 <u style="width:36px">下午 </u>org.apache.catalina.startup.Catalina start</div>
    </div>
  </div>
</div>

<div class="abs" style="left:1213px;top:0;width:17px;height:1020px;background:linear-gradient(90deg,rgba(0,0,0,0),rgba(0,0,0,.03) 40%,rgba(0,0,0,.15))"></div>
<div class="abs" style="left:1230px;top:0;width:1px;height:1020px;background:#6c6c6c"></div>
<!-- ======================= CHROME ======================= -->
<div id="chr">
  <div id="omni"></div>
  <svg class="abs" style="left:13px;top:-2.5px" width="16" height="16" viewBox="0 0 16 16"><path d="M15 8H2.4M8 2L2 8L8 14" fill="none" stroke="#5f6368" stroke-width="1.7"/></svg>
  <svg class="abs" style="left:45px;top:-2.5px" width="16" height="16" viewBox="0 0 16 16"><path d="M1 8H13.6M8 2L14 8L8 14" fill="none" stroke="#c0c2c5" stroke-width="1.7"/></svg>
  <svg class="abs" style="left:77px;top:-2.5px" width="16" height="16" viewBox="0 0 16 16"><path d="M13.6 8A5.6 5.6 0 1 1 11.9 3.9" fill="none" stroke="#5f6368" stroke-width="1.7"/><path d="M14 .8V5.6H9.2Z" fill="#5f6368"/></svg>
  <svg class="abs" style="left:116.7px;top:-1.8px" width="16" height="16" viewBox="0 0 16 16"><circle cx="8" cy="8" r="6.6" fill="none" stroke="#5f6368" stroke-width="1.5"/><rect x="7.2" y="7.2" width="1.6" height="4.4" fill="#5f6368"/><rect x="7.2" y="4.2" width="1.6" height="1.7" fill="#5f6368"/></svg>
  <span class="abs nw" id="t-omni" style="left:141.5px;top:-2.5px;font-size:16px;line-height:18px;color:#202124">localhost<span style="color:#80868b">:8080/Spring-websocket/loginvalidate#</span></span>
  <div id="bm">
    <svg class="abs" style="left:14px;top:11px" width="13" height="13" viewBox="0 0 13 13"><rect x="0" y="0" width="3" height="3" fill="#ea4335"/><rect x="5" y="0" width="3" height="3" fill="#ea4335"/><rect x="10" y="0" width="3" height="3" fill="#ea4335"/><rect x="0" y="5" width="3" height="3" fill="#34a853"/><rect x="5" y="5" width="3" height="3" fill="#4285f4"/><rect x="10" y="5" width="3" height="3" fill="#fbbc05"/><rect x="0" y="10" width="3" height="3" fill="#34a853"/><rect x="5" y="10" width="3" height="3" fill="#fbbc05"/><rect x="10" y="10" width="3" height="3" fill="#fbbc05"/></svg>
    <span id="bm-app" style="left:37px;font-size:12px">应用</span>
    <div class="abs" style="left:77px;top:10px;width:16px;height:16px;background:#d6e9f8"></div><svg class="abs" style="left:77px;top:10px" width="16" height="16" viewBox="0 0 16 16"><path d="M1 8.4H11.4Q11.6 6.4 13 5.8Q13.6 6.8 13.2 7.6Q14.4 7.4 15.4 8Q14.6 9.6 12.6 9.6Q11 13.6 6.4 13.6Q1.6 13.6 1 8.4Z" fill="#1d91e6"/><rect x="4.4" y="4" width="2" height="2" fill="#1d91e6"/><rect x="3.2" y="6.2" width="2" height="2" fill="#1d91e6"/><rect x="5.6" y="6.2" width="2" height="2" fill="#1d91e6"/><rect x="8" y="6.2" width="2" height="2" fill="#1d91e6"/><rect x="6.8" y="4" width="2" height="2" fill="#1d91e6"/></svg>
    <span id="bm-1" style="left:101px">https://www.icod...</span>
    <svg class="abs" style="left:230px;top:10px" width="17" height="17" viewBox="0 0 17 17"><circle cx="8.5" cy="8.5" r="8.2" fill="#e60012"/><path d="M12.4 5.2H7.6Q5.2 5.2 5.2 7.6V11.8H10.4Q12.4 11.8 12.4 9.8V8.2H8.4" fill="none" stroke="#fff" stroke-width="1.7"/></svg>
    <span id="bm-2" style="left:255px">Spring-websocket...</span>
    <svg class="abs" style="left:384px;top:10px" width="17" height="17"><use href="#gh"/></svg>
    <span id="bm-3" style="left:409px">yourmaileyes/MO...</span>
    <svg class="abs" style="left:539px;top:11px" width="15" height="15" viewBox="0 0 15 15"><circle cx="7.5" cy="7.5" r="7" fill="#5f6368"/><path d="M4 2.4Q6 3.6 5 5.4Q3 6 2.6 8Q4.4 8.6 5.4 10.4Q5 12.4 6.6 13.6Q8 12 9.6 11Q10 9 8 8.4Q6.4 8.6 6.2 7Q8.6 6.4 9 4.4Q10.6 4 11 2.2" fill="none" stroke="#fff" stroke-width="1.3"/></svg>
    <span id="bm-4" style="left:563px">登录 · Issue #1 · Qi...</span>
    <svg class="abs" style="left:693px;top:10px" width="17" height="17"><use href="#gh"/></svg>
    <span id="bm-5" style="left:717px">NTDXYG/guanlixit...</span>
    <svg class="abs" style="left:847px;top:10px" width="17" height="17"><use href="#gh"/></svg>
    <span id="bm-6" style="left:871px">sfturing/hosp_ord...</span>
    <svg class="abs" style="left:1001px;top:10px" width="17" height="17"><use href="#gh"/></svg>
    <span id="bm-7" style="left:1025px">Issues · jhyscode/...</span>
  </div>
<div id="badge" class="abs" style="left:912.7px;top:853px;width:80px;height:80px">
    <svg class="abs" style="left:0;top:0" width="80" height="80" viewBox="0 0 80 80">
      <defs><radialGradient id="gBadge" cx="50%" cy="50%" r="50%"><stop offset="0" stop-color="#fff"/><stop offset=".6" stop-color="#fff"/><stop offset="1" stop-color="#d9f7dd"/></radialGradient></defs>
      <circle cx="40" cy="40" r="36" fill="#fbfbfb"/>
      <circle cx="40" cy="40" r="33" fill="#fff" stroke="#ececec" stroke-width="1"/>
      <path d="M40 9.5 A30.5 30.5 0 0 1 69.9 46" fill="none" stroke="#4cd964" stroke-width="4.6"/>
      <circle cx="40" cy="40" r="28.2" fill="url(#gBadge)" stroke="#21c04a" stroke-width="1.1"/>
      <path d="M23.6 48V54.4M21.4 52.4L23.6 55L25.8 52.4Z" fill="#1aa83c" stroke="#1aa83c" stroke-width="1.2"/>
    </svg>
    <span class="abs nw" style="left:22px;top:21px;font-size:23px;line-height:24px;color:#555;letter-spacing:-1.2px">29<span style="font-size:13px;letter-spacing:0">%</span></span>
    <span class="abs nw" style="left:30px;top:48.5px;font-size:9px;line-height:11px;color:#333">2.3K/s</span>
  </div>
  <div id="crpage" class="bs">
    <!-- local x = abs-1232 -->
    <div class="panel" style="left:119px;top:62px;width:262px;height:173px">
      <div class="ph">当前登录用户</div>
      <div class="lg" style="left:15px;top:53px;width:230px;height:83px">
        <div class="lgi">你好，matou</div>
        <div class="lgi">退出</div>
      </div>
    </div>
    <div class="panel" style="left:119px;top:255px;width:262px;height:132px">
      <div class="ph">当前在线的其他用户</div>
      <div class="lg" style="left:15px;top:53px;width:230px;height:42px">
        <div class="lgi">yuanma</div>
      </div>
    </div>
    <div class="panel" style="left:119px;top:407px;width:262px;height:158px">
      <div class="ph">群发系统广播</div>
      <div class="fc" style="left:15px;top:53px;width:230px">大家好</div>
      <div class="btn act" style="left:15px;top:107px;box-shadow:0 0 0 1px #9ec5f5">发送</div>
    </div>
    <div class="panel" style="left:411px;top:62px;width:848px;height:558px">
      <div class="ph">与yuanma的聊天</div>
      <div class="well" style="left:15px;top:53px;width:816px;height:400px">
        <div class="msg info" style="left:19px;top:19px;width:776px"><b>yuanma 2019-08-22 13:56:45</b><i>你好</i></div>
        <div class="msg info" style="left:19px;top:84px;width:776px"><b>yuanma 2019-08-22 13:57:00</b><i>请问你是谁</i></div>
        <div class="msg succ" style="left:19px;top:149px;width:776px"><b>我 Thu Aug 22 2019 13:57:17 GMT+0800 (中国标准时间)</b><i>我是源码码头站长啊</i></div>
        <div class="msg info" style="left:19px;top:214px;width:776px"><b>系统广播 2019-08-22 13:57:39</b><i>大家好</i></div>
      </div>
      <div class="fc" style="left:15px;top:473px;width:816px"></div>
      <div class="btn" style="left:15px;top:507px">发送</div>
    </div>
  </div>
</div>

</body>
</html>
